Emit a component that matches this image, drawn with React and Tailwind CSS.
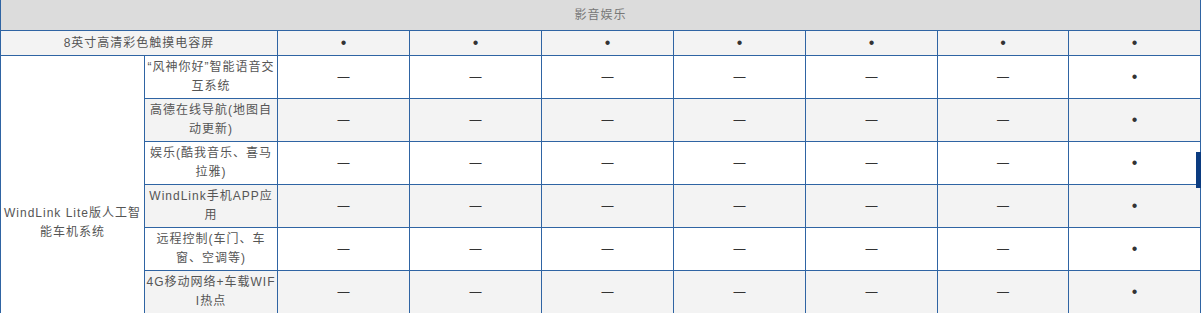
import React from "react";

const FONT = { fontFamily: '"Liberation Sans", Arial, "Noto Sans CJK SC", sans-serif' };

const rows = [
  { lines: ["“风神你好”智能语音交", "互系统"], gray: false },
  { lines: ["高德在线导航(地图自", "动更新)"], gray: true },
  { lines: ["娱乐(酷我音乐、喜马", "拉雅)"], gray: false },
  { lines: ["WindLink手机APP应", "用"], gray: true },
  { lines: ["远程控制(车门、车", "窗、空调等)"], gray: false },
  { lines: ["4G移动网络+车载WIF", "I热点"], gray: true },
];

const cell = "border-r border-b border-[#2f64a3] flex items-center justify-center text-center";

function Dot() {
  return <span className="text-[#333] text-[16px] leading-none tracking-normal">•</span>;
}
function Dash() {
  return <span className="text-[#333] text-[12px] leading-none tracking-normal">—</span>;
}

export default function App() {
  return (
    <div className="relative w-[1201px] h-[313px] overflow-hidden bg-white" style={FONT}>
      <div className="grid grid-cols-[144px_133px_132px_132px_132px_132px_132px_131px_132px] grid-rows-[31px_25px_repeat(6,43px)] w-[1201px] border-l border-[#2f64a3] text-[12px] tracking-[1px] text-[#555] leading-[19px]">
        <div className={`${cell} col-span-9 bg-[#dcdcdc] text-[#777]`}>影音娱乐</div>

        <div className={`${cell} col-span-2 bg-[#f3f3f3]`}>8英寸高清彩色触摸电容屏</div>
        {Array.from({ length: 7 }).map((_, i) => (
          <div key={i} className={`${cell} bg-[#f3f3f3]`}>
            <Dot />
          </div>
        ))}

        <div className={`${cell} row-span-6 bg-white pt-[76px] px-1`}>
          <div className="whitespace-nowrap">
            WindLink Lite版人工智
            <br />
            能车机系统
          </div>
        </div>

        {rows.map((r, ri) => (
          <React.Fragment key={ri}>
            <div className={`${cell} ${r.gray ? "bg-[#f3f3f3]" : "bg-white"}`}>
              <div className="whitespace-nowrap">
                {r.lines[0]}
                <br />
                {r.lines[1]}
              </div>
            </div>
            {Array.from({ length: 7 }).map((_, i) => (
              <div key={i} className={`${cell} ${r.gray ? "bg-[#f3f3f3]" : "bg-white"}`}>
                {i === 6 ? <Dot /> : <Dash />}
              </div>
            ))}
          </React.Fragment>
        ))}
      </div>
      <div className="absolute left-[1196px] top-[152px] w-[5px] h-[36px] bg-[#0b3b80]" />
    </div>
  );
}
